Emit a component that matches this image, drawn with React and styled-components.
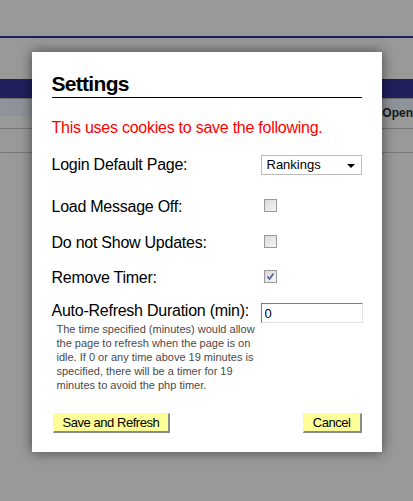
import React from "react";
import styled, { createGlobalStyle } from "styled-components";

const GlobalStyle = createGlobalStyle`
  html, body {
    margin: 0;
    padding: 0;
    background: #999999;
    font-family: "Liberation Sans", Arial, sans-serif;
  }
`;

// page behind the overlay
const Page = styled.div`
  position: relative;
  width: 413px;
  height: 501px;
  overflow: hidden;
  background: #999999;
`;

const TopRule = styled.div`
  margin-top: 36px;
  height: 2px;
  background: #1e1e5c;
`;

const NavBand = styled.div`
  margin-top: 41px;
  height: 19px;
  background: #20205c;
  border-bottom: 1px solid #6e6e6e;
`;

const HeaderRow = styled.div`
  display: flex;
  justify-content: flex-end;
  align-items: flex-end;
  height: 30px;
  background: linear-gradient(#8f949b 0 17px, #999999 17px);
  border-bottom: 1px solid #777777;
  font-size: 12px;
  font-weight: bold;
  color: #1a1a1a;
  white-space: nowrap;
  padding-bottom: 8px;
  box-sizing: border-box;
`;

const TableRow = styled.div`
  height: 23px;
  border-bottom: 1px solid #7a7a7a;
`;

// modal
const Overlay = styled.div`
  position: absolute;
  inset: 0;
  display: flex;
  justify-content: center;
  align-items: flex-start;
  padding-top: 52px;
`;

const Modal = styled.div`
  width: 350px;
  height: 400px;
  box-sizing: border-box;
  padding: 20px;
  background: #ffffff;
  box-shadow: 0 0 12px rgba(0, 0, 0, 0.55);
  display: flex;
  flex-direction: column;
`;

const Title = styled.h2`
  margin: 0;
  font-size: 21px;
  line-height: 24px;
  font-weight: bold;
  letter-spacing: -0.7px;
  color: #000;
  padding-bottom: 1px;
  border-bottom: 1px solid #000;
`;

const Notice = styled.p`
  margin: 21px 0 0;
  font-size: 16px;
  line-height: 18px;
  letter-spacing: -0.25px;
  color: #ff0000;
`;

const Row = styled.div`
  display: grid;
  grid-template-columns: 1fr 101px;
  align-items: ${(p) => (p.$center ? "center" : "start")};
  margin-top: ${(p) => p.$gap}px;
`;

const Label = styled.div`
  font-size: 16px;
  line-height: 18px;
  letter-spacing: -0.25px;
  color: #000;
  white-space: nowrap;
`;

const SelectBox = styled.div`
  position: relative;
  height: 20px;
  box-sizing: border-box;
  border: 1px solid #bcbcbc;
  padding-left: 5px;
  font-size: 13px;
  line-height: 18px;
  color: #000;

  &::after {
    content: "";
    position: absolute;
    right: 6px;
    top: 8px;
    border-left: 4px solid transparent;
    border-right: 4px solid transparent;
    border-top: 4px solid #000;
  }
`;

const Check = styled.span`
  display: flex;
  align-items: center;
  justify-content: center;
  width: 13px;
  height: 13px;
  box-sizing: border-box;
  margin: 1px 0 0 3px;
  border: 1px solid #9a9a9a;
  background: linear-gradient(135deg, #d8d8d8, #f6f6f6);
`;

const TextInput = styled.input`
  width: 102px;
  height: 20px;
  box-sizing: border-box;
  margin: 1px 0 0 -1px;
  padding: 0 0 0 3px;
  border-style: solid;
  border-width: 1px;
  border-color: #7a7a7a #e2e2e2 #e2e2e2 #7a7a7a;
  font-family: "Liberation Sans", Arial, sans-serif;
  font-size: 13px;
  color: #000;
  outline: none;
`;

const Help = styled.div`
  width: 205px;
  margin: 2px 0 0 5px;
  font-size: 11px;
  line-height: 14px;
  color: #4a4a4a;
`;

const Buttons = styled.div`
  display: flex;
  justify-content: space-between;
  margin-top: 21px;
  padding-left: 1px;
`;

const Button = styled.button`
  height: 20px;
  padding: 0 9px;
  background: #ffff99;
  border-style: solid;
  border-width: 1px 2px 2px 1px;
  border-color: #f0f0f0 #8a8a8a #8a8a8a #f0f0f0;
  font-family: "Liberation Sans", Arial, sans-serif;
  font-size: 13px;
  line-height: 17px;
  letter-spacing: -0.45px;
  color: #000;
`;

function CheckBox({ checked }) {
  return (
    <Check>
      {checked && (
        <svg width="9" height="9" viewBox="0 0 9 9">
          <path d="M1.5 4.5 L3.5 7 L7.5 1.5" fill="none" stroke="#4b5e94" strokeWidth="1.6" />
        </svg>
      )}
    </Check>
  );
}

export default function App() {
  return (
    <>
      <GlobalStyle />
      <Page>
        <TopRule />
        <NavBand />
        <HeaderRow>Open</HeaderRow>
        <TableRow />

        <Overlay>
          <Modal>
            <Title>Settings</Title>
            <Notice>This uses cookies to save the following.</Notice>

            <Row $gap={18} $center>
              <Label>Login Default Page:</Label>
              <SelectBox>Rankings</SelectBox>
            </Row>

            <Row $gap={23}>
              <Label>Load Message Off:</Label>
              <CheckBox />
            </Row>

            <Row $gap={18}>
              <Label>Do not Show Updates:</Label>
              <CheckBox />
            </Row>

            <Row $gap={17}>
              <Label>Remove Timer:</Label>
              <CheckBox checked />
            </Row>

            <Row $gap={15}>
              <div>
                <Label>Auto-Refresh Duration (min):</Label>
                <Help>
                  The time specified (minutes) would allow the page to refresh
                  when the page is on idle. If 0 or any time above 19 minutes is
                  specified, there will be a timer for 19 minutes to avoid the
                  php timer.
                </Help>
              </div>
              <TextInput defaultValue="0" readOnly />
            </Row>

            <Buttons>
              <Button>Save and Refresh</Button>
              <Button>Cancel</Button>
            </Buttons>
          </Modal>
        </Overlay>
      </Page>
    </>
  );
}
